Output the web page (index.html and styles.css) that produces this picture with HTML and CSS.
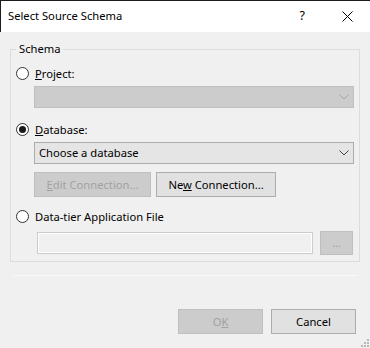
FILE: index.html
```html
<!DOCTYPE html>
<html lang="en">
<head>
  <meta charset="UTF-8" />
  <title>Select Source Schema</title>
  <link rel="stylesheet" href="styles.css">
</head>
<body>
  <div class="window">
    <div class="titlebar">
      <span class="title">Select Source Schema</span>
      <span class="help">?</span>
      <svg class="close" width="11" height="11" viewBox="0 0 11 11">
        <path d="M0.5 0.5 L10.5 10.5 M10.5 0.5 L0.5 10.5" stroke="#000" stroke-width="1" fill="none"/>
      </svg>
    </div>

    <fieldset class="group">
      <legend>Schema</legend>

      <label class="radio-row">
        <span class="radio"></span>
        <span><u>P</u>roject:</span>
      </label>
      <div class="combo disabled">
        <span></span>
        <svg class="chevron" width="10" height="6" viewBox="0 0 10 6"><path d="M0.5 0.5 L5 5 L9.5 0.5" stroke="#a8a8a8" fill="none"/></svg>
      </div>

      <label class="radio-row db-row">
        <span class="radio checked"></span>
        <span><u>D</u>atabase:</span>
      </label>
      <div class="combo">
        <span>Choose a database</span>
        <svg class="chevron" width="10" height="6" viewBox="0 0 10 6"><path d="M0.5 0.5 L5 5 L9.5 0.5" stroke="#444" fill="none"/></svg>
      </div>
      <div class="conn-buttons">
        <button class="btn conn disabled"><u>E</u>dit Connection...</button>
        <button class="btn conn">Ne<u>w</u> Connection...</button>
      </div>

      <label class="radio-row dac-row">
        <span class="radio"></span>
        <span>Data-tier Application File</span>
      </label>
      <div class="file-row">
        <div class="textbox"></div>
        <button class="btn browse disabled">...</button>
      </div>
    </fieldset>

    <div class="separator"></div>

    <div class="footer">
      <button class="btn action disabled">O<u>K</u></button>
      <button class="btn action">Cancel</button>
    </div>

    <svg class="grip" width="8" height="8" viewBox="0 0 8 8">
      <rect x="6" y="0" width="2" height="2" fill="#b8b8b8"/>
      <rect x="3" y="3" width="2" height="2" fill="#b8b8b8"/>
      <rect x="6" y="3" width="2" height="2" fill="#b8b8b8"/>
      <rect x="0" y="6" width="2" height="2" fill="#b8b8b8"/>
      <rect x="3" y="6" width="2" height="2" fill="#b8b8b8"/>
      <rect x="6" y="6" width="2" height="2" fill="#b8b8b8"/>
    </svg>
  </div>
</body>
</html>
```

FILE: styles.css
```css
:root {
  --bg: #f0f0f0;
  --text: #000000;
  --disabled-text: #a2a2a2;
  --btn-bg: #e1e1e1;
  --btn-border: #adadad;
  --disabled-bg: #cccccc;
  --disabled-border: #bfbfbf;
}

* {
  box-sizing: border-box;
  margin: 0;
  padding: 0;
}

body {
  font-family: 'Segoe UI', 'Noto Sans', sans-serif;
  font-size: 11.2px;
  line-height: 16px;
  color: var(--text);
  background: var(--bg);
}

.window {
  position: relative;
  width: 370px;
  height: 348px;
  display: flex;
  flex-direction: column;
}

.titlebar {
  height: 32px;
  background: #ffffff;
  border-top: 1px solid #1c1c1c;
  border-left: 1px solid #1c1c1c;
  display: flex;
  align-items: center;
  padding-left: 7px;
  padding-bottom: 1px;
}

.title {
  flex: 1;
}

.help {
  font-size: 12.5px;
  margin-right: 37px;
}

.close {
  margin-right: 17px;
}

/* group box */
.group {
  margin: 9px 10px 0;
  border: 1px solid #dcdcdc;
  padding: 8px 5px 6px 5px;
  min-width: 0;
}

.group legend {
  padding: 0 3px;
  line-height: 16px;
}

.radio-row {
  display: flex;
  align-items: center;
  height: 17px;
  gap: 6px;
}

.radio {
  width: 13px;
  height: 13px;
  border: 1px solid #333333;
  border-radius: 50%;
  background: #ffffff;
  display: flex;
  align-items: center;
  justify-content: center;
}

.radio.checked::after {
  content: "";
  width: 7px;
  height: 7px;
  border-radius: 50%;
  background: #1a1a1a;
}

.db-row {
  margin-top: 13px;
}

.dac-row {
  margin-top: 11px;
}

.combo {
  margin: 4px 0 0 18px;
  height: 22px;
  border: 1px solid #acacac;
  background: #e5e5e5;
  display: flex;
  align-items: center;
  justify-content: space-between;
  padding: 0 4px 0 4px;
}

.combo.disabled {
  background: var(--disabled-bg);
  border-color: var(--disabled-border);
}

.btn {
  font-family: inherit;
  font-size: 11.2px;
  line-height: 16px;
  color: var(--text);
  background: var(--btn-bg);
  border: 1px solid var(--btn-border);
  height: 25px;
}

.btn.disabled {
  color: var(--disabled-text);
  background: var(--disabled-bg);
  border-color: var(--disabled-border);
}

.conn-buttons {
  display: flex;
  gap: 5px;
  margin: 8px 0 0 18px;
}

.conn {
  width: 117px;
}

.conn + .conn {
  width: 120px;
}

.file-row {
  display: flex;
  align-items: center;
  gap: 7px;
  margin: 6px 1px 0 21px;
}

.textbox {
  flex: 1;
  height: 22px;
  border: 1px solid #cccccc;
  background: var(--bg);
  box-shadow: inset 0 0 0 1px #ffffff;
}

.browse {
  width: 33px;
  height: 24px;
  font-size: 10px;
}

.separator {
  margin: 13px 13px 0;
  height: 1px;
  background: #fafafa;
}

.footer {
  display: flex;
  justify-content: flex-end;
  gap: 8px;
  margin-top: 33px;
  padding-right: 14px;
}

.action {
  width: 85px;
}

.grip {
  position: absolute;
  right: 1px;
  bottom: 1px;
}
```
